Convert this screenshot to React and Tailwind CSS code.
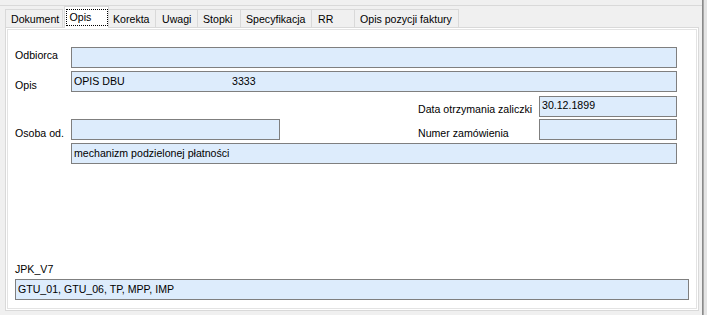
import React from "react";

const font = { fontFamily: '"Liberation Sans", Arial, sans-serif' };

function Tab({ label, w, first, pl = "pl-[6px]" }) {
  return (
    <div
      className={`h-[18px] flex items-center justify-start pt-[2px] border-t border-r border-[#d9d9d9] bg-[#f0f0f0] ${first ? "border-l" : ""} ${pl} ${w}`}
    >
      {label}
    </div>
  );
}

function Field({ w, children }) {
  return (
    <div
      className={`h-[21px] border border-[#7f7f7f] bg-[#ddecfc] flex items-center pl-[2px] shrink-0 ${w}`}
    >
      {children}
    </div>
  );
}

export default function App() {
  return (
    <div
      className="w-[707px] h-[315px] bg-[#f0f0f0] flex overflow-hidden text-[10.6px] text-black"
      style={font}
    >
      <div className="w-[702px] flex flex-col">
        <div className="h-[5px]" />
        <div className="h-px bg-[#d9d9d9]" />
        <div className="h-px" />
        {/* tab row */}
        <div className="h-[20px] flex items-end pl-[5px]">
          <Tab label="Dokument" w="w-[58px]" first pl="pl-[5px]" />
          <div className="w-px" />
          <div className="relative z-10 -mb-px h-[22px] w-[45px] bg-white border-t border-l border-r border-[#d9d9d9] flex items-start justify-center pt-[2px]">
            <div className="h-[17px] w-[42px] border border-dotted border-black flex items-center pl-[3px]">
              Opis
            </div>
          </div>
          <Tab label="Korekta" w="w-[47px]" pl="pl-[4px]" />
          <Tab label="Uwagi" w="w-[42px]" />
          <Tab label="Stopki" w="w-[43px]" pl="pl-[5px]" />
          <Tab label="Specyfikacja" w="w-[71px]" pl="pl-[5px]" />
          <Tab label="RR" w="w-[43px]" />
          <Tab label="Opis pozycji faktury" w="w-[104px]" pl="pl-[5px]" />
        </div>
        {/* panel */}
        <div className="ml-[5px] w-[694px] h-[284px] border border-[#d9d9d9] bg-white p-px flex">
          <div className="flex-1 border border-[#e3e3e3] flex flex-col pl-[7px] pb-[8px]">
            <div className="mt-[17px] flex h-[21px]">
              <div className="w-[56px] flex items-center pb-[4px]">Odbiorca</div>
              <Field w="w-[606px]" />
            </div>
            <div className="mt-[3px] flex h-[21px]">
              <div className="w-[56px] flex items-center pt-[8px]">Opis</div>
              <Field w="w-[606px]">
                <span className="w-[158px]">OPIS DBU</span>
                <span>3333</span>
              </Field>
            </div>
            <div className="mt-[4px] flex h-[21px]">
              <div className="w-[403px]" />
              <div className="w-[121px] flex items-center pt-[7px]">Data otrzymania zaliczki</div>
              <Field w="w-[138px]">
                <span className="-mt-[2px]">30.12.1899</span>
              </Field>
            </div>
            <div className="mt-[2px] flex h-[21px]">
              <div className="w-[56px] flex items-center pt-[9px]">Osoba od.</div>
              <Field w="w-[209px]" />
              <div className="w-[138px]" />
              <div className="w-[121px] flex items-center pt-[8px]">Numer zamówienia</div>
              <Field w="w-[138px]" />
            </div>
            <div className="mt-[3px] flex h-[21px]">
              <div className="w-[56px]" />
              <Field w="w-[606px]">mechanizm podzielonej płatności</Field>
            </div>
            <div className="flex-1" />
            <div className="h-[14px] flex items-center">JPK_V7</div>
            <div className="mt-[2px] flex">
              <Field w="w-[674px]">GTU_01, GTU_06, TP, MPP, IMP</Field>
            </div>
          </div>
        </div>
      </div>
      <div className="w-px bg-[#8a8a8a]" />
      <div className="w-px bg-[#a9a9a9]" />
      <div className="flex-1 bg-[#e4e4e4]" />
    </div>
  );
}
